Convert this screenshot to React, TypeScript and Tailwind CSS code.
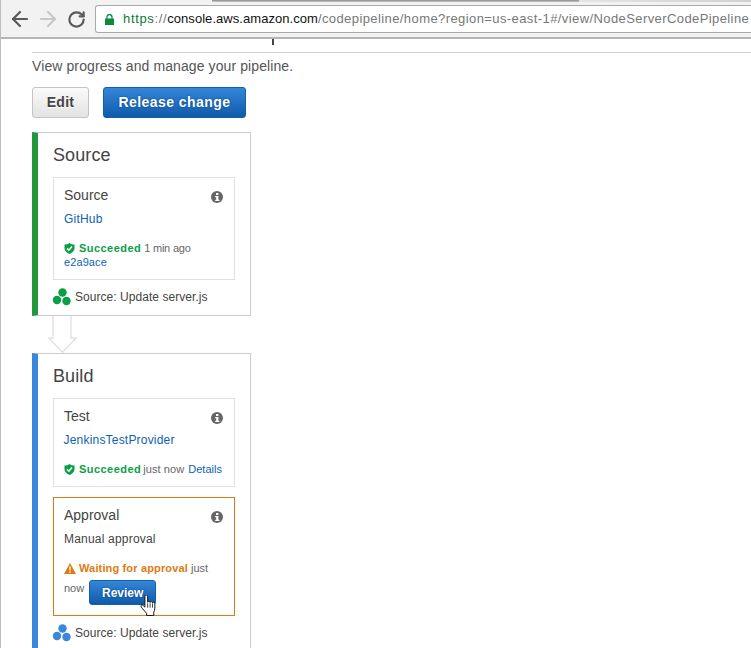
import { ArrowLeft, ArrowRight, RotateCw } from "lucide-react";

function InfoIcon() {
  return (
    <svg viewBox="0 0 12 12" className="w-3 h-3 mt-[6px] shrink-0">
      <circle cx="6" cy="6" r="6" fill="#666" />
      <rect x="5" y="2" width="2.4" height="2" fill="#fff" />
      <path d="M4.2 5h3.2v3.8h1v1.2H4.2V8.8h1V6.2h-1z" fill="#fff" />
    </svg>
  );
}

function CheckShield() {
  return (
    <svg viewBox="0 0 11 11" className="w-[11px] h-[11px] shrink-0">
      <path d="M5.5 0 7.500 1.200 10.500 1.500V5.500C10.500 8 8 10 5.500 11 3 10 .5 8 .5 5.500V1.500L3.500 1.200z" fill="#0a9e45" />
      <path d="M3 5.400 4.900 7.200 8 3.600" fill="none" stroke="#fff" strokeWidth="1.500" />
    </svg>
  );
}

function Dots({ color }: { color: string }) {
  return (
    <svg viewBox="0 0 18 18" className="w-[18px] h-[18px] shrink-0">
      <circle cx="9.5" cy="4.5" r="4.2" fill={color} />
      <circle cx="4" cy="12" r="4.2" fill={color} />
      <circle cx="13.5" cy="13" r="4.2" fill={color} />
    </svg>
  );
}

function StageFooter({ color }: { color: string }) {
  return (
    <div className="flex items-center gap-1 h-[18px] text-xs text-[#444]">
      <Dots color={color} />
      <span className="tracking-[0.05px]">Source: Update server.js</span>
    </div>
  );
}

function HandCursor() {
  return (
    <svg viewBox="0.5 0.5 14.5 19" className="absolute left-[51px] top-[15px] w-[17px] h-[21px]">
      <path
        d="M4.5 1.5c0-1.300 2.500-1.300 2.500 0V7c0-1 2.200-1 2.200.2 0-1 2.200-1 2.200.3 0-.8 2.100-.8 2.100.5v4.500c0 1.500-.6 2.500-1 3.500V19H6v-2L2 12.500C.8 11 .6 9.800 1.500 9.500 2.300 9.300 3.500 10.500 4.500 11.500z"
        fill="#fff"
        stroke="#111"
        strokeWidth="0.9"
      />
      <path d="M7 8v4M9.200 8v4M11.400 8v4" stroke="#111" strokeWidth="0.7" fill="none" />
    </svg>
  );
}

const boxPlain = "border border-[#e0e0e0] pl-[10px] pr-[11px] pt-[7px]";
const boxOrange = "border border-[#dd7b12] pl-[10px] pr-[11px] pt-[7px]";

function ActionBox({ title, children, orange }: { title: string; children: React.ReactNode; orange?: boolean }) {
  return (
    <div className={orange ? boxOrange : boxPlain}>
      <div className="flex justify-between items-start">
        <span className="text-sm leading-5 text-[#444]">{title}</span>
        <InfoIcon />
      </div>
      {children}
    </div>
  );
}

export default function App() {
  return (
    <div className="w-[751px] h-[648px] overflow-hidden bg-white border-l border-[#bdbdbd] flex flex-col font-['Liberation_Sans',Arial,sans-serif]">
      {/* browser chrome */}
      <div className="h-[39px] shrink-0 bg-[#f2f2f2] border-b-2 border-[#b5b5b5] flex items-center pl-[7px] pt-[1px] relative">
        <div className="absolute top-0 left-[211px] w-[367px] h-[2px] bg-gradient-to-b from-[#8c8c8c] to-[#c8c8c8]" />
        <div className="absolute top-0 left-[578px] right-0 h-[2px] bg-gradient-to-r from-[#e4e4e4] to-[#d0d0d0]" />
        <ArrowLeft className="w-6 h-6 text-[#5a5a5a]" strokeWidth={2.2} />
        <ArrowRight className="w-6 h-6 text-[#c8c8c8] ml-1" strokeWidth={2.2} />
        <RotateCw className="w-[19px] h-[19px] text-[#5a5a5a] ml-[7px]" strokeWidth={2.8} />
        <div className="ml-[9px] flex-1 h-[28px] bg-white border border-r-0 border-[#a9a9a9] rounded-l-[3px] flex items-center pl-[9px] text-[13px] whitespace-nowrap overflow-hidden">
          <svg viewBox="0 0 9 11" className="w-[9px] h-[11px] mr-[9px] shrink-0">
            <path d="M2 5V3a2.500 2.500 0 0 1 5 0v2" fill="none" stroke="#0b8a3c" strokeWidth="1.300" />
            <rect x="0" y="4.500" width="9" height="6.500" rx="0.5" fill="#0b8a3c" />
          </svg>
          <span className="text-[#0b7a35] tracking-[0.65px]">https</span>
          <span className="text-[#777] tracking-[0.65px]">://</span>
          <span className="text-[#111] tracking-[0.05px]">console.aws.amazon.com</span>
          <span className="text-[#777] tracking-[0.41px]">/codepipeline/home?region=us-east-1#/view/NodeServerCodePipeline</span>
        </div>
      </div>

      {/* page */}
      <div className="flex-1 pl-[31px] relative">
        <div className="absolute left-[271px] top-0 w-[2px] h-[6px] bg-[#444]" />
        <div className="mt-[13px] border-t border-[#d0d0d0]" />
        <p className="mt-[3px] text-sm leading-5 text-[#555] tracking-[0.1px]">View progress and manage your pipeline.</p>
        <div className="mt-[11px] flex gap-[14px]">
          <button className="w-[57px] h-[31px] rounded-[3px] border border-[#c4c4c4] bg-gradient-to-b from-[#fafafa] to-[#e3e3e3] pb-[1px] text-sm font-bold text-[#444] tracking-[0.3px] [text-shadow:0_1px_0_#fff]">
            Edit
          </button>
          <button className="w-[143px] h-[31px] rounded-[3px] border border-[#155fa8] bg-gradient-to-b from-[#3486d9] to-[#0e5bab] pb-[1px] text-sm font-bold text-white tracking-[0.45px] [text-shadow:0_0_2px_#0b3f78]">
            Release change
          </button>
        </div>

        {/* Source stage */}
        <div className="mt-[14px] w-[219px] border border-[#cccccc] border-l-[6px] border-l-[#23983a] px-[15px]">
          <h2 className="mt-[10px] text-lg leading-6 text-[#444] tracking-[0.1px]">Source</h2>
          <div className="mt-[10px]">
            <ActionBox title="Source">
              <a className="block mt-[6px] text-xs leading-4 text-[#0f62b5] tracking-[0.2px]">GitHub</a>
              <div className="mt-[13px] flex items-center gap-[3px] text-[11px] leading-[16px] text-[#666]">
                <CheckShield />
                <span className="font-bold text-[#0a9e45] ml-[1px] tracking-[0.45px]">Succeeded</span>
                <span className="tracking-[-0.2px]">1 min ago</span>
              </div>
              <a className="block text-[11px] leading-[13px] pb-[10px] text-[#0f62b5] tracking-[0.1px]">e2a9ace</a>
            </ActionBox>
          </div>
          <div className="mt-[8px] mb-[9px]">
            <StageFooter color="#0a9e45" />
          </div>
        </div>

        {/* transition arrow */}
        <svg viewBox="0 0 30 37" className="w-[30px] h-[37px] ml-[16px]">
          <path d="M5 0V22H.8L14.500 36.200 28.200 22H23V0" fill="#fff" stroke="#e3e3e3" strokeWidth="1.500" />
        </svg>

        {/* Build stage */}
        <div className="w-[219px] border border-[#cccccc] border-l-[6px] border-l-[#3a87db] px-[15px] pb-[20px]">
          <h2 className="mt-[10px] text-lg leading-6 text-[#444] tracking-[0.1px]">Build</h2>
          <div className="mt-[10px]">
            <ActionBox title="Test">
              <a className="block mt-[6px] text-xs leading-4 text-[#0f62b5] tracking-[0.2px] -ml-[0.5px]">JenkinsTestProvider</a>
              <div className="mt-[13px] pb-[9px] flex items-center gap-[3px] text-[11px] leading-[16px] text-[#666]">
                <CheckShield />
                <span className="font-bold text-[#0a9e45] ml-[1px] tracking-[0.45px]">Succeeded</span>
                <span className="tracking-[0.1px] -ml-[1px]">just now</span>
                <a className="text-[#0f62b5] ml-[1px]">Details</a>
              </div>
            </ActionBox>
          </div>
          <div className="mt-[10px]">
            <ActionBox title="Approval" orange>
              <p className="mt-[6px] text-xs leading-4 text-[#444] tracking-[0.2px]">Manual approval</p>
              <div className="mt-[13px] flex items-center gap-[3px] text-[11px] leading-[16px] text-[#666]">
                <svg viewBox="0 0 12 11" className="w-3 h-[11px] shrink-0">
                  <path d="M6 0 12 11H0z" fill="#dd7b12" />
                  <rect x="5.300" y="3.500" width="1.400" height="4" fill="#fff" />
                  <rect x="5.300" y="8.300" width="1.400" height="1.400" fill="#fff" />
                </svg>
                <span className="font-bold text-[#dd7b12] tracking-[0.15px]">Waiting for approval</span>
                <span>just</span>
              </div>
              <div className="mt-[4px] pb-[10px] flex items-start gap-[5px] text-[11px] leading-4 text-[#666]">
                <span>now</span>
                <span className="relative">
                  <button className="w-[67px] h-[25px] rounded-[3px] border border-[#155fa8] bg-gradient-to-b from-[#3486d9] to-[#0e5bab] text-xs font-bold text-white [text-shadow:0_0_2px_#0b3f78]">
                    Review
                  </button>
                  <HandCursor />
                </span>
              </div>
            </ActionBox>
          </div>
          <div className="mt-[8px]">
            <StageFooter color="#3a87db" />
          </div>
        </div>
      </div>
    </div>
  );
}
